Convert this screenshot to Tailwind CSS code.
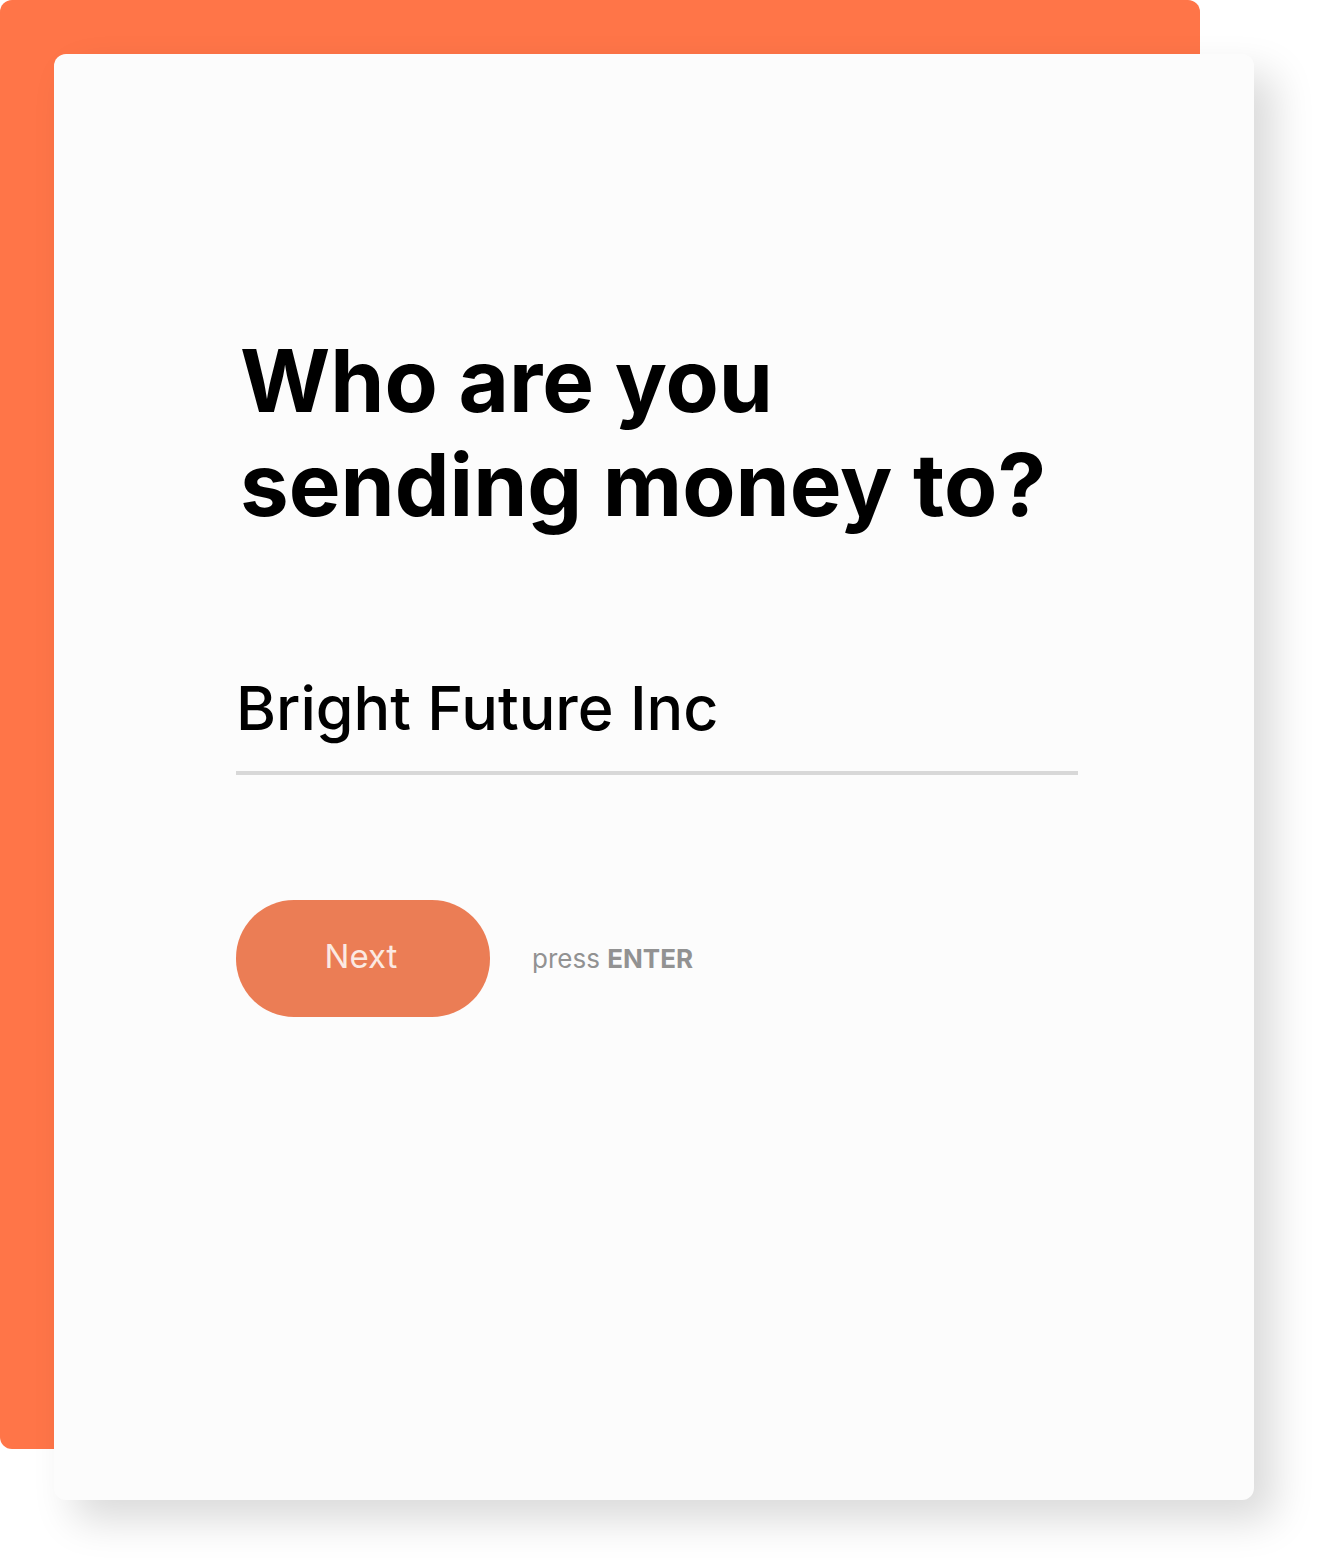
<!DOCTYPE html>
<html lang="en">
<head>
<meta charset="utf-8">
<meta name="viewport" content="width=device-width, initial-scale=1">
<title>Send money</title>
<script src="https://cdn.jsdelivr.net/npm/@tailwindcss/browser@4"></script>
</head>
<body class="bg-white font-['Inter',sans-serif] text-black">
<main class="relative grid min-h-screen overflow-hidden pt-[54px] pr-[66px] pb-[67px] pl-[54px]">
  <div class="absolute top-0 right-[120px] bottom-[118px] left-0 rounded-xl bg-[#ff7548]" aria-hidden="true"></div>
  <form class="relative rounded-xl bg-[#fcfcfc] pt-[275px] pr-[176px] pl-[182px] shadow-[20px_20px_40px_rgba(0,0,0,0.15)]">
    <h1 class="pl-1 text-[87px] leading-[104px] font-bold whitespace-nowrap"><label for="recipient">Who are you<br>sending money to?</label></h1>
    <input id="recipient" type="text" value="Bright Future Inc" class="mt-[111px] block h-[127px] w-full border-b-4 border-[#d8d8d8] bg-transparent pb-1 text-[61px] font-medium outline-none">
    <div class="mt-[125px] flex items-center gap-[42px]">
      <button type="button" class="h-[117px] w-[254px] rounded-[58px] bg-[#eb7d55] pr-1 pb-1 text-[33px] text-[#fbe9e2]">Next</button>
      <p class="text-[26px] text-[#929292]">press <strong class="font-bold">ENTER</strong></p>
    </div>
  </form>
</main>
</body>
</html>
